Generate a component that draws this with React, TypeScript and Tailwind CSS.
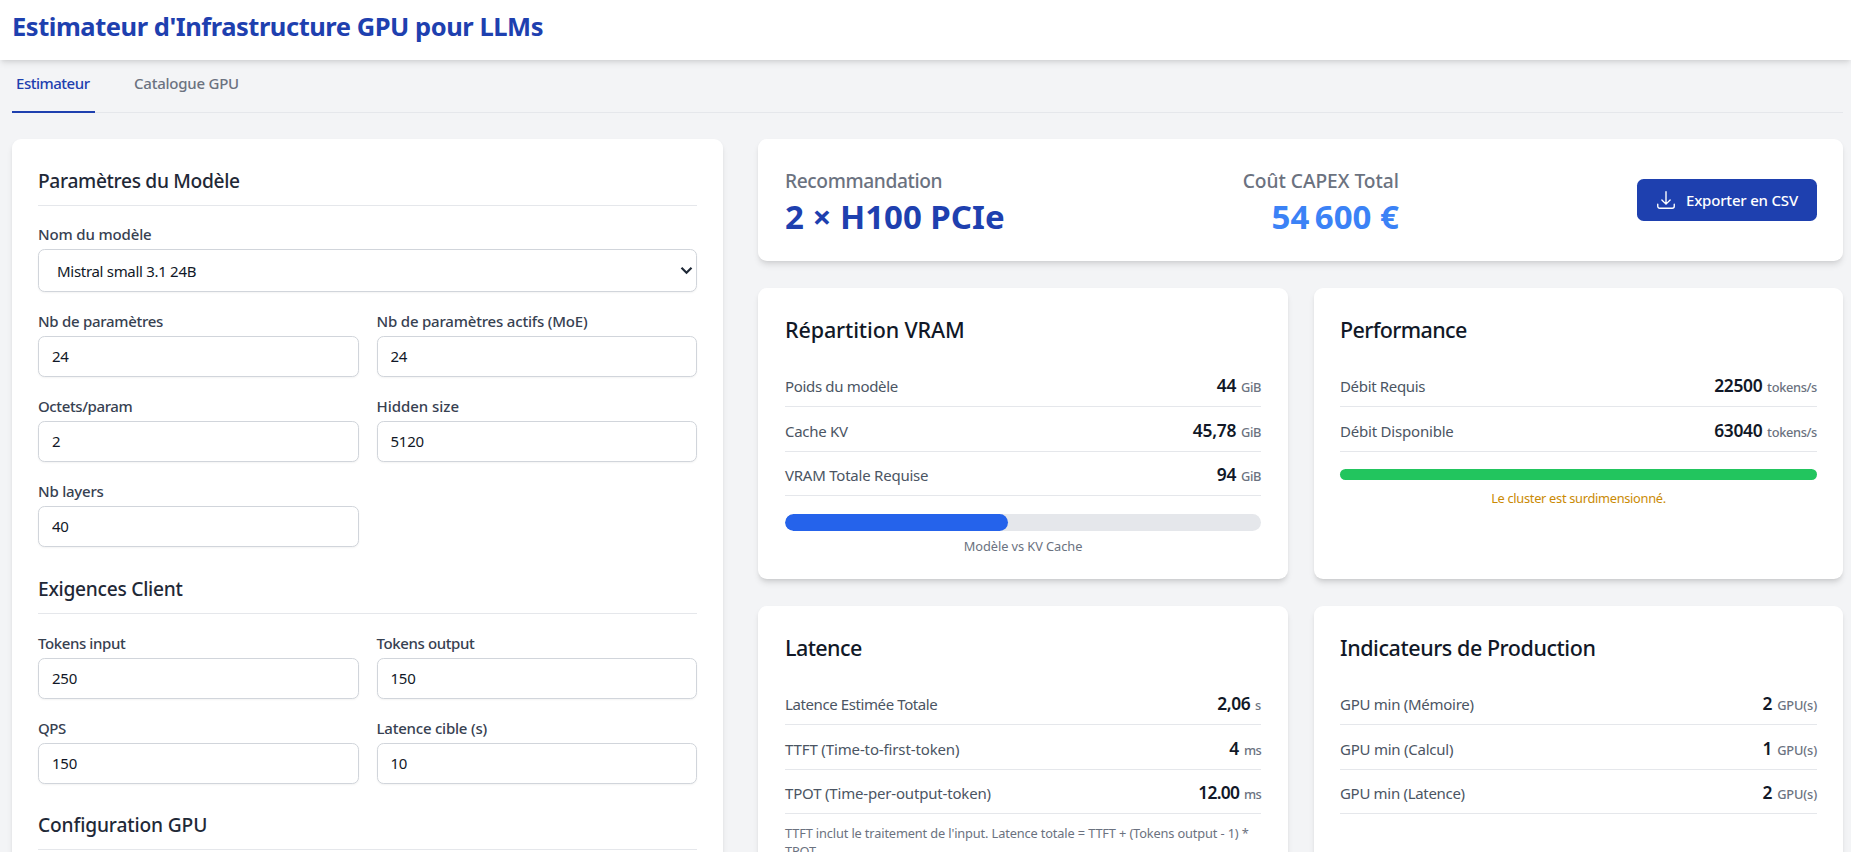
import React from "react";

const card = "rounded-[9px] bg-white shadow-[0_4.4px_6.6px_-1.1px_rgba(0,0,0,0.1),0_2.2px_4.4px_-2.2px_rgba(0,0,0,0.1)]";

type FieldProps = { label: string; value: string; track: string; valueTrack?: string };

function Field({ label, value, track, valueTrack = "tracking-[-0.25px]" }: FieldProps) {
  return (
    <div>
      <label className={`block h-[26px] text-[15px] leading-[22px] font-medium text-[#374151] ${track}`}>{label}</label>
      <input
        defaultValue={value}
        className={`block h-[41px] w-full rounded-[6.6px] border border-[#d1d5db] bg-white px-[13px] pb-px text-[15px] text-[#111827] shadow-[0_1px_2px_rgba(0,0,0,0.05)] outline-none ${valueTrack}`}
      />
    </div>
  );
}

function SectionTitle({ text, className }: { text: string; className: string }) {
  return (
    <h3 className={`mb-[18px] h-[41px] border-b border-[#e5e7eb] text-[19.2px] leading-[31px] font-medium text-[#1f2937] ${className}`}>
      {text}
    </h3>
  );
}

type RowProps = { label: string; track: string; value: string; valueTrack: string; unit: string; unitTrack: string; size?: string };

function Row({ label, track, value, valueTrack, unit, unitTrack, size = "h-[45px] pt-[10px]" }: RowProps) {
  return (
    <div className={`flex items-baseline justify-between border-b border-[#e5e7eb] leading-[26px] whitespace-nowrap ${size}`}>
      <span className={`text-[15px] text-[#4b5563] ${track}`}>{label}</span>
      <span className="flex items-baseline gap-[4.7px]">
        <span className={`text-[17.4px] font-semibold text-[#111827] ${valueTrack}`}>{value}</span>
        <span className={`text-[12.8px] font-medium text-[#6b7280] ${unitTrack}`}>{unit}</span>
      </span>
    </div>
  );
}

function Panel({ title, track, children }: { title: string; track: string; children: React.ReactNode }) {
  return (
    <section className={`${card} h-[291px] px-[27px] pt-[26px] even:px-[26px]`}>
      <h2 className={`mb-[17px] text-[21.5px] leading-[31px] font-medium text-[#111827] ${track}`}>{title}</h2>
      {children}
    </section>
  );
}

function DownloadIcon() {
  return (
    <svg className="size-[22px]" viewBox="0 0 24 24" fill="none" stroke="currentColor" strokeWidth="1.5" strokeLinecap="round" strokeLinejoin="round">
      <path d="M3 16.5v2.25A2.25 2.25 0 0 0 5.25 21h13.5A2.25 2.25 0 0 0 21 18.75V16.5M16.5 12 12 16.5m0 0L7.5 12m4.5 4.5V3" />
    </svg>
  );
}

export default function App() {
  return (
    <div className="h-[852px] overflow-hidden bg-[#f3f4f6] font-['Noto_Sans','Open_Sans',sans-serif]">
      <header className="relative h-[60px] bg-white pl-3 shadow-[0_4.4px_6.6px_-1.1px_rgba(0,0,0,0.1),0_2.2px_4.4px_-2.2px_rgba(0,0,0,0.1)]">
        <h1 className="pt-[9px] text-[25.5px] leading-[35px] font-bold tracking-[-0.46px] text-[#1e40af]">
          Estimateur d'Infrastructure GPU pour LLMs
        </h1>
      </header>

      <nav className="mr-2 ml-3 flex h-[53px] items-stretch gap-[35px] border-b border-[#e5e7eb] text-[15px] font-medium">
        <button className="-mb-px w-[83px] border-b-2 border-[#1e40af] pb-[6px] pl-[4px] text-left leading-[22px] tracking-[-0.48px] text-[#1e40af]">
          Estimateur
        </button>
        <button className="-mb-px border-b-2 border-transparent pb-[6px] pl-[4px] text-left leading-[22px] tracking-[-0.24px] text-[#6b7280]">
          Catalogue GPU
        </button>
      </nav>

      <main className="mt-[26px] mr-2 ml-3 flex items-start gap-[35px]">
        <aside className={`${card} h-[800px] w-[711px] shrink-0 px-[26px] pt-[26px]`}>
          <SectionTitle text="Paramètres du Modèle" className="tracking-[-0.33px]" />
          <label className="block h-[25px] text-[15px] leading-[21px] font-medium tracking-[-0.15px] text-[#374151]">Nom du modèle</label>
          <div className="relative mb-[18px]">
            <select className="block h-[43px] w-full appearance-none rounded-[6.6px] border border-[#d1d5db] bg-white pt-px pl-[18px] text-[15px] tracking-[-0.3px] text-[#111827] shadow-[0_1px_2px_rgba(0,0,0,0.05)] outline-none">
              <option>Mistral small 3.1 24B</option>
            </select>
            <svg className="pointer-events-none absolute top-[17px] right-[4px] h-[9px] w-[13px]" viewBox="0 0 13 9" fill="none" stroke="#1f2937" strokeWidth="2.2">
              <path d="M1.5 1.8 6.5 6.8 11.5 1.8" />
            </svg>
          </div>
          <div className="grid grid-cols-2 gap-[18px]">
            <Field label="Nb de paramètres" value="24" track="tracking-[-0.29px]" />
            <Field label="Nb de paramètres actifs (MoE)" value="24" track="tracking-[-0.19px]" />
            <Field label="Octets/param" value="2" track="tracking-[-0.39px]" />
            <Field label="Hidden size" value="5120" track="tracking-[-0.03px]" />
            <Field label="Nb layers" value="40" track="tracking-[-0.23px]" />
          </div>

          <div className="mt-[26px]">
            <SectionTitle text="Exigences Client" className="tracking-[-0.27px]" />
            <div className="grid grid-cols-2 gap-[18px]">
              <Field label="Tokens input" value="250" track="tracking-[-0.4px]" />
              <Field label="Tokens output" value="150" track="tracking-[-0.39px]" />
              <Field label="QPS" value="150" track="tracking-[-0.46px]" />
              <Field label="Latence cible (s)" value="10" track="tracking-[-0.22px]" />
            </div>
          </div>

          <div className="mt-[25px]">
            <SectionTitle text="Configuration GPU" className="tracking-[-0.15px]" />
          </div>
        </aside>

        <div className="flex min-w-0 flex-1 flex-col gap-[27px]">
          <section className={`${card} flex h-[122px] items-center justify-between pr-[26px] pl-[27px] whitespace-nowrap`}>
            <div className="pt-[2px]">
              <p className="text-[19.2px] leading-[31px] font-medium tracking-[-0.4px] text-[#6b7280]">Recommandation</p>
              <p className="text-[33px] leading-[41px] font-bold text-[#1e40af]">2 × H100 PCIe</p>
            </div>
            <div className="pt-[2px] text-right">
              <p className="text-[19.2px] leading-[31px] font-medium tracking-[-0.03px] text-[#6b7280]">Coût CAPEX Total</p>
              <p className="text-[33px] leading-[41px] font-bold tracking-[-0.35px] text-[#3b82f6]">54{"\u202f"}600{"\u00a0"}€</p>
            </div>
            <button className="flex h-[42px] w-[180px] items-center gap-[9px] rounded-[6.6px] bg-[#1e40af] pl-[18px] text-[15px] font-medium tracking-[-0.19px] text-white">
              <DownloadIcon />
              Exporter en CSV
            </button>
          </section>

          <div className="grid grid-cols-[530px_1fr] gap-x-[26px] gap-y-[27px]">
            <Panel title="Répartition VRAM" track="tracking-[-0.12px]">
              <Row label="Poids du modèle" track="tracking-[-0.33px]" value="44" valueTrack="tracking-[-0.12px]" unit="GiB" unitTrack="tracking-[-0.38px]" />
              <Row label="Cache KV" track="tracking-[-0.29px]" value="45,78" valueTrack="tracking-[-0.23px]" unit="GiB" unitTrack="tracking-[-0.38px]" />
              <Row label="VRAM Totale Requise" track="tracking-[-0.23px]" value="94" valueTrack="tracking-[-0.12px]" unit="GiB" unitTrack="tracking-[-0.38px]" size="h-[44px] pt-[9px]" />
              <div className="mt-[18px] h-[17px] overflow-hidden rounded-full bg-[#e5e7eb]">
                <div className="h-full w-[46.8%] rounded-full bg-[#2563eb]" />
              </div>
              <p className="mt-[6px] text-center text-[12.8px] leading-[18px] tracking-[-0.06px] text-[#6b7280]">Modèle vs KV Cache</p>
            </Panel>

            <Panel title="Performance" track="tracking-[-0.62px]">
              <Row label="Débit Requis" track="tracking-[-0.33px]" value="22500" valueTrack="tracking-[-0.3px]" unit="tokens/s" unitTrack="tracking-[-0.34px]" />
              <Row label="Débit Disponible" track="tracking-[-0.2px]" value="63040" valueTrack="tracking-[-0.3px]" unit="tokens/s" unitTrack="tracking-[-0.34px]" />
              <div className="mt-[17px] h-[11px] rounded-full bg-[#22c55e]" />
              <p className="mt-[9px] text-center text-[12.8px] leading-[18px] tracking-[-0.29px] text-[#ca8a04]">Le cluster est surdimensionné.</p>
            </Panel>

            <Panel title="Latence" track="tracking-[-0.57px]">
              <Row label="Latence Estimée Totale" track="tracking-[-0.4px]" value="2,06" valueTrack="tracking-[-0.4px]" unit="s" unitTrack="tracking-[-0.3px]" />
              <Row label="TTFT (Time-to-first-token)" track="tracking-[-0.13px]" value="4" valueTrack="tracking-[0px]" unit="ms" unitTrack="tracking-[-0.62px]" />
              <Row label="TPOT (Time-per-output-token)" track="tracking-[-0.18px]" value="12.00" valueTrack="tracking-[-0.72px]" unit="ms" unitTrack="tracking-[-0.62px]" size="h-[44px] pt-[9px]" />
              <p className="mt-[10px] text-[12.8px] leading-[18px] tracking-[-0.14px] text-[#6b7280]">
                TTFT inclut le traitement de l'input. Latence totale = TTFT + (Tokens output - 1) * TPOT.
              </p>
            </Panel>

            <Panel title="Indicateurs de Production" track="tracking-[-0.44px]">
              <Row label="GPU min (Mémoire)" track="tracking-[-0.27px]" value="2" valueTrack="tracking-[0px]" unit="GPU(s)" unitTrack="tracking-[-0.15px]" />
              <Row label="GPU min (Calcul)" track="tracking-[-0.24px]" value="1" valueTrack="tracking-[0px]" unit="GPU(s)" unitTrack="tracking-[-0.15px]" />
              <Row label="GPU min (Latence)" track="tracking-[-0.31px]" value="2" valueTrack="tracking-[0px]" unit="GPU(s)" unitTrack="tracking-[-0.15px]" size="h-[44px] pt-[9px]" />
            </Panel>
          </div>
        </div>
      </main>
    </div>
  );
}
